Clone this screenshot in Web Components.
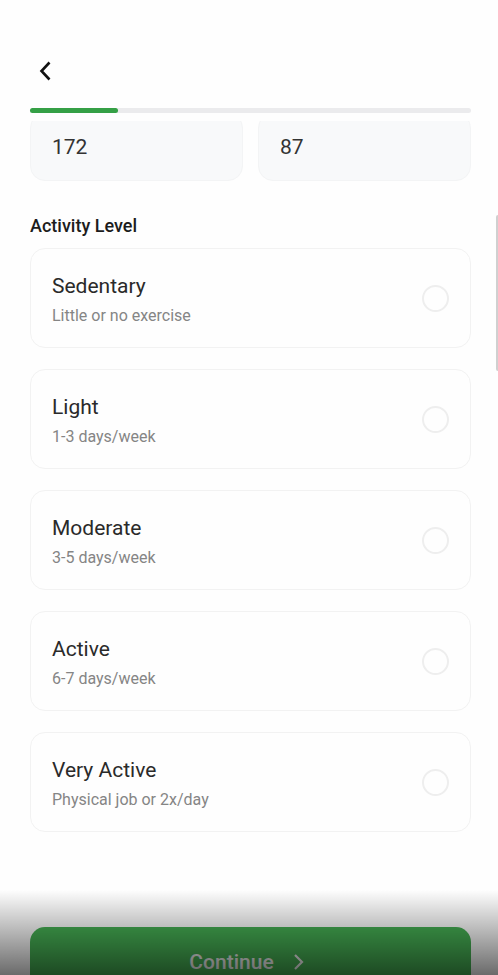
<!DOCTYPE html>
<html lang="en">
<head>
<meta charset="utf-8">
<meta name="viewport" content="width=device-width, initial-scale=1">
<title>Activity Level</title>
<style>
  html, body {
    height: 100%;
  }

  body {
    margin: 0;
    overflow: hidden;
    background: #fefefe;
    color: #222;
    font-family: Roboto, "Liberation Sans", sans-serif;
  }
</style>
</head>
<body>
  <setup-screen>
    <step-header slot="header" value="20"></step-header>
    <measure-field label="Height" value="172"></measure-field>
    <measure-field label="Weight" value="87"></measure-field>
    <option-group slot="options" label="Activity Level">
      <activity-option name="Sedentary" detail="Little or no exercise"></activity-option>
      <activity-option name="Light" detail="1-3 days/week"></activity-option>
      <activity-option name="Moderate" detail="3-5 days/week"></activity-option>
      <activity-option name="Active" detail="6-7 days/week"></activity-option>
      <activity-option name="Very Active" detail="Physical job or 2x/day"></activity-option>
    </option-group>
    <continue-button slot="footer">Continue</continue-button>
  </setup-screen>

<script>
"use strict";

(() => {
  customElements.define("setup-screen", class extends HTMLElement {
    constructor() {
      super();

      this.attachShadow({mode: "open"}).innerHTML = `
        <style>
          :host {
            display: block;
            position: relative;
            height: 100%;
            overflow: hidden;
          }

          .screen {
            padding: 54px 27px 0 30px;
          }

          main {
            overflow: hidden;
            margin-top: 8px;
          }

          /* the first row sits partly scrolled under the header */
          .fields {
            display: grid;
            grid-template-columns: 1fr 1fr;
            gap: 15px;
            margin-top: -8px;
          }

          .options {
            margin-top: 33px;
          }

          footer {
            margin-top: 95px;
          }

          .shade {
            position: absolute;
            left: 0;
            right: 0;
            bottom: 0;
            height: 85px;
            background: linear-gradient(rgba(0, 0, 0, 0), rgba(0, 0, 0, 0.58));
            pointer-events: none;
          }

          .thumb {
            position: absolute;
            top: 22%;
            right: 0;
            width: 2px;
            height: 16%;
            border-radius: 2px 0 0 2px;
            background: #d0d0d0;
          }
        </style>
        <div class="screen">
          <slot name="header"></slot>
          <main>
            <div class="fields"><slot></slot></div>
            <div class="options"><slot name="options"></slot></div>
          </main>
          <footer><slot name="footer"></slot></footer>
        </div>
        <div class="thumb"></div>
        <div class="shade"></div>
      `;
    }
  });

  customElements.define("step-header", class extends HTMLElement {
    constructor() {
      super();

      this.attachShadow({mode: "open"}).innerHTML = `
        <style>
          :host {
            display: block;
          }

          button {
            display: flex;
            align-items: center;
            justify-content: center;
            width: 30px;
            height: 34px;
            padding: 0;
            border: 0;
            background: none;
            color: #111;
            cursor: pointer;
          }

          .track {
            height: 5px;
            margin-top: 20px;
            border-radius: 3px;
            background: #ebebed;
          }

          .bar {
            height: 100%;
            border-radius: 3px;
            background: #35a046;
          }
        </style>
        <button type="button" aria-label="Back">
          <svg width="12" height="20" viewBox="0 0 12 20" fill="none" stroke="currentColor" stroke-width="2.6">
            <path d="M10.5 1.5 2.5 10l8 8.5"/>
          </svg>
        </button>
        <div class="track" role="progressbar" aria-label="Progress" aria-valuemin="0" aria-valuemax="100">
          <div class="bar"></div>
        </div>
      `;
    }

    connectedCallback() {
      const value = this.getAttribute("value");
      this.shadowRoot.querySelector(".track").setAttribute("aria-valuenow", value);
      this.shadowRoot.querySelector(".bar").style.width = `${value}%`;
    }
  });

  customElements.define("measure-field", class extends HTMLElement {
    constructor() {
      super();

      this.attachShadow({mode: "open"}).innerHTML = `
        <style>
          :host {
            display: block;
            min-width: 0;
          }

          input {
            display: block;
            box-sizing: border-box;
            width: 100%;
            height: 68px;
            padding: 0 21px;
            border: 1px solid #f3f4f5;
            border-radius: 15px;
            background: #f8f9fa;
            color: #333;
            font: 21px/24px Roboto, "Liberation Sans", sans-serif;
            outline: none;
          }
        </style>
        <input type="text" inputmode="numeric">
      `;
    }

    connectedCallback() {
      const input = this.shadowRoot.querySelector("input");
      input.value = this.getAttribute("value");
      input.setAttribute("aria-label", this.getAttribute("label"));
    }
  });

  customElements.define("option-group", class extends HTMLElement {
    constructor() {
      super();

      this.attachShadow({mode: "open"}).innerHTML = `
        <style>
          :host {
            display: block;
          }

          h2 {
            margin: 0 0 10px;
            color: #1c1c1c;
            font-size: 18px;
            font-weight: 500;
            line-height: 24px;
          }

          .list {
            display: grid;
            gap: 21px;
          }
        </style>
        <h2 id="title"></h2>
        <div class="list" role="radiogroup" aria-labelledby="title"><slot></slot></div>
      `;

      // radios live in separate shadow roots, so they are grouped by hand
      this.addEventListener("pick", e => {
        for (const option of this.children) {
          option.checked = option === e.target;
        }
      });
    }

    connectedCallback() {
      this.shadowRoot.getElementById("title").textContent = this.getAttribute("label");
    }
  });

  customElements.define("activity-option", class extends HTMLElement {
    constructor() {
      super();

      this.attachShadow({mode: "open"}).innerHTML = `
        <style>
          :host {
            display: block;
          }

          label {
            display: flex;
            align-items: center;
            justify-content: space-between;
            box-sizing: border-box;
            min-height: 100px;
            padding: 12px 21px;
            border: 1px solid #f2f2f2;
            border-radius: 15px;
            background: #fefefe;
            cursor: pointer;
          }

          .text {
            display: grid;
            gap: 6px;
            padding-top: 3px;
          }

          .name {
            color: #2a2a2a;
            font-size: 21px;
            line-height: 26px;
          }

          .detail {
            color: #858585;
            font-size: 16px;
            line-height: 22px;
          }

          input {
            flex: none;
            appearance: none;
            width: 27px;
            height: 27px;
            margin: 0;
            border: 2px solid #eee;
            border-radius: 50%;
          }

          input:checked {
            border: 8px solid #35a046;
          }
        </style>
        <label>
          <span class="text">
            <span class="name"></span>
            <span class="detail"></span>
          </span>
          <input type="radio">
        </label>
      `;

      this.input = this.shadowRoot.querySelector("input");
      this.input.addEventListener("change", () => {
        this.dispatchEvent(new CustomEvent("pick", {bubbles: true}));
      });
    }

    connectedCallback() {
      this.shadowRoot.querySelector(".name").textContent = this.getAttribute("name");
      this.shadowRoot.querySelector(".detail").textContent = this.getAttribute("detail");
    }

    set checked(val) {
      this.input.checked = val;
    }
  });

  customElements.define("continue-button", class extends HTMLElement {
    constructor() {
      super();

      this.attachShadow({mode: "open"}).innerHTML = `
        <style>
          :host {
            display: block;
          }

          button {
            display: flex;
            align-items: center;
            justify-content: center;
            gap: 14px;
            width: 100%;
            height: 70px;
            padding: 0;
            border: 0;
            border-radius: 15px;
            background: #46b154;
            color: #f4f4f4;
            font: 500 21px/24px Roboto, "Liberation Sans", sans-serif;
            cursor: pointer;
          }
        </style>
        <button type="button">
          <slot></slot>
          <svg width="24" height="24" viewBox="0 0 24 24" fill="none" stroke="currentColor" stroke-width="2.2">
            <path d="m7 5 7 7-7 7"/>
          </svg>
        </button>
      `;
    }
  });
})();
</script>
</body>
</html>
